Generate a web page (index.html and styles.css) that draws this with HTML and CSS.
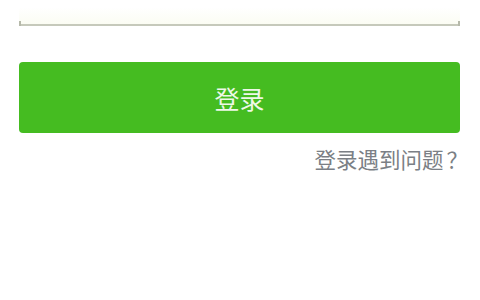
FILE: index.html
```html
<!DOCTYPE html>
<html lang="zh-CN">
<head>
<meta charset="utf-8">
<link rel="stylesheet" href="styles.css">
</head>
<body>
<main class="page">
  <div class="field">
    <span class="label">密码</span>
    <span class="eye">◉</span>
  </div>
  <button class="login">登录</button>
  <div class="help"><a class="help-link">登录遇到问题<span class="q">？</span></a></div>
</main>
</body>
</html>
```
FILE: styles.css
```css
html, body {
  margin: 0;
  padding: 0;
  background: #ffffff;
  width: 480px;
  height: 300px;
  overflow: hidden;
  font-family: "Noto Sans CJK SC", "Noto Sans", sans-serif;
}
.page {
  padding: 0 20px 0 19px;
  display: flex;
  flex-direction: column;
}
.field {
  position: relative;
  margin-top: -18px;
  height: 42px;
  display: flex;
  justify-content: space-between;
  align-items: flex-start;
  border-bottom: 2px solid #c6c9bb;
  background: linear-gradient(to bottom, #ffffff 60%, #fbfcf3 100%);
}
.field::before,
.field::after {
  content: "";
  position: absolute;
  bottom: -2px;
  width: 2px;
  height: 5px;
  background: #b6b9aa;
}
.field::before { left: 0; }
.field::after { right: 0; }
.label {
  margin-left: 16px;
  font-size: 17px;
  line-height: 17px;
  color: #666;
}
.eye {
  margin-right: 26px;
  font-size: 16px;
  line-height: 17px;
  color: #aaa;
}
.login {
  margin-top: 36px;
  height: 71px;
  border: none;
  border-radius: 4px;
  background: #45bc21;
  color: #eef8e8;
  font-family: inherit;
  font-size: 25px;
  padding: 0;
}
.help {
  display: flex;
  justify-content: flex-end;
  margin-top: 13px;
  margin-right: -8px;
}
.help-link {
  font-size: 21.5px;
  line-height: 26px;
  color: #7b7f85;
}
.q {
  display: inline-block;
  padding-left: 3px;
}
```
